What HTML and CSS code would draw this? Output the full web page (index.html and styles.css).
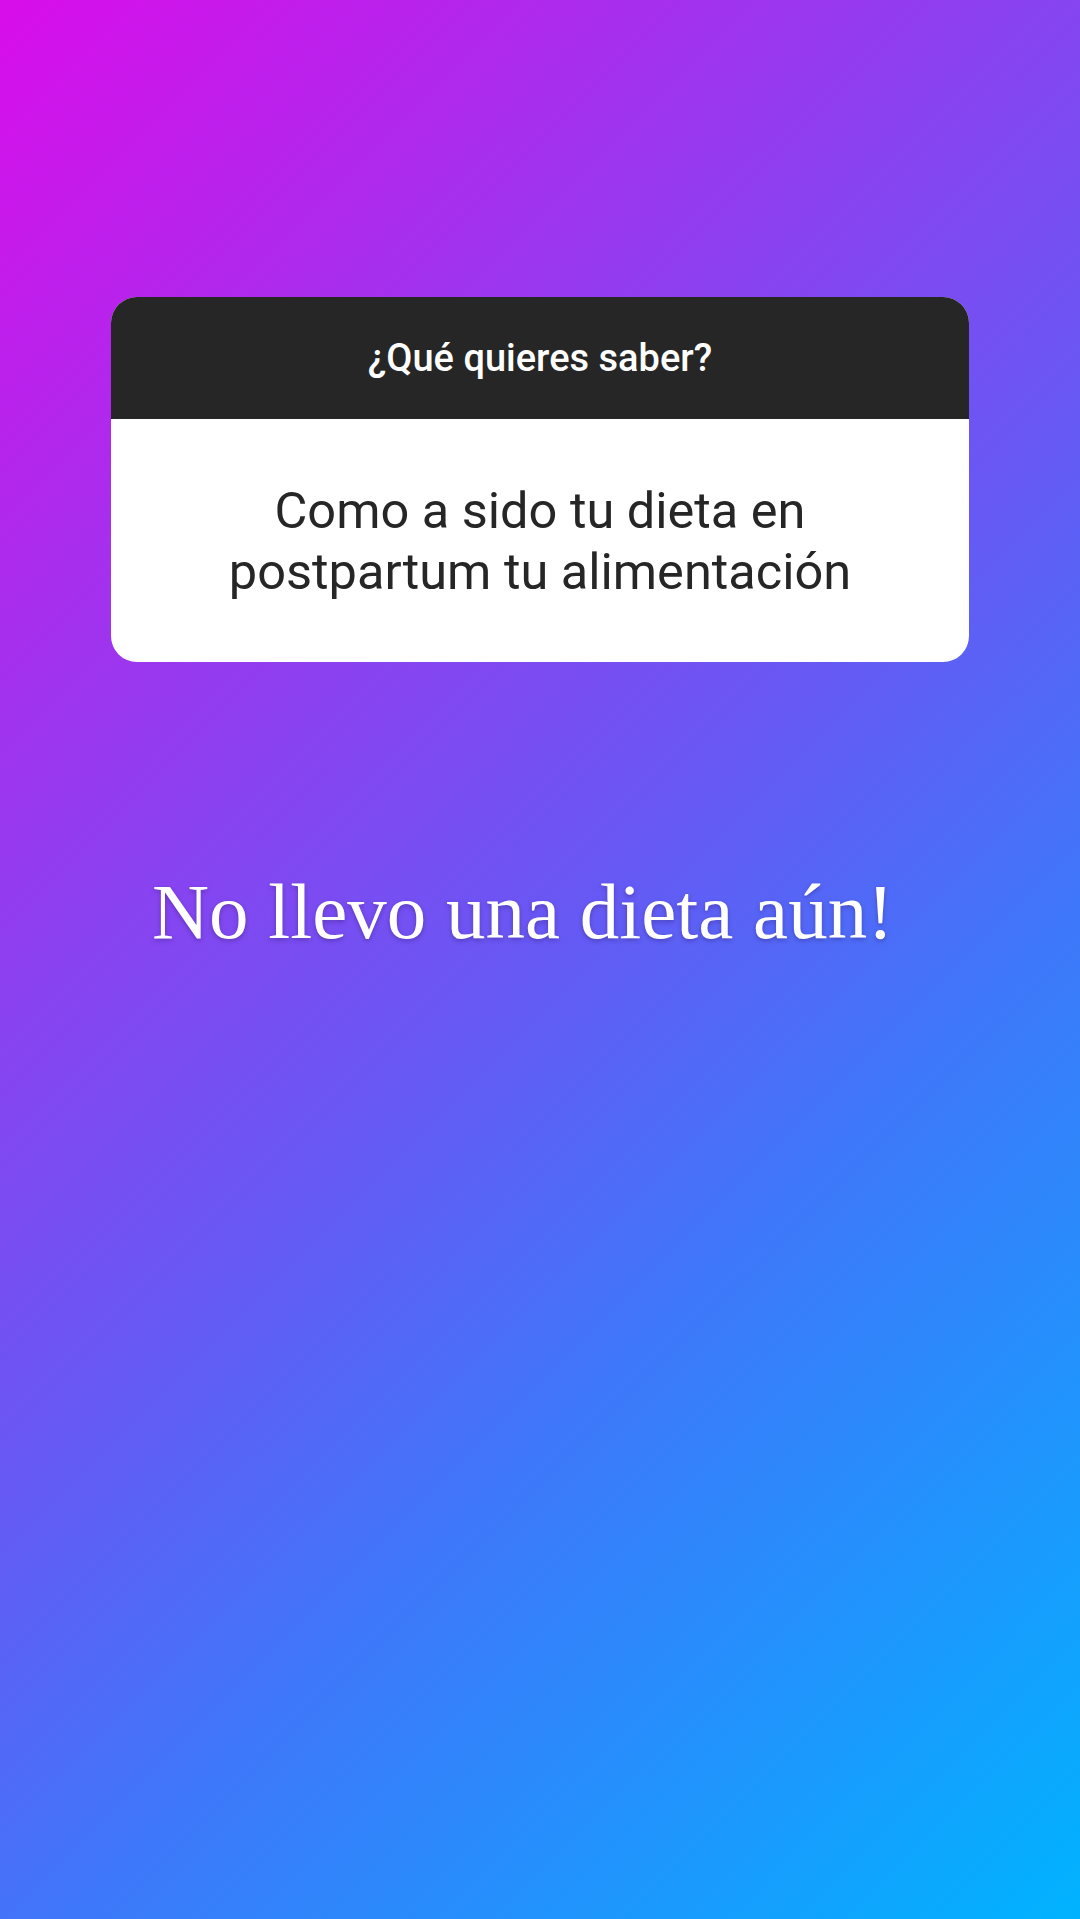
FILE: index.html
```html
<!DOCTYPE html>
<html lang="es">
<head>
<meta charset="utf-8">
<title>Pregunta</title>
<link rel="stylesheet" href="styles.css">
</head>
<body>
<main class="story">
  <section class="qbox">
    <header class="qbox-head">¿Qué quieres saber?</header>
    <div class="qbox-body">
      <p class="qbox-text">Como a sido tu dieta en<br>postpartum tu alimentación</p>
    </div>
  </section>
  <p class="answer">No llevo una dieta aún!</p>
</main>
</body>
</html>
```

FILE: styles.css
```css
html, body {
  margin: 0;
  padding: 0;
}
body {
  width: 1080px;
  height: 1919px;
  overflow: hidden;
}
.story {
  width: 1080px;
  height: 1919px;
  box-sizing: border-box;
  padding-top: 297px;
  background: linear-gradient(135deg, #d90de9 0%, #8a42f0 34%, #6659f4 50%, #3f77fa 66%, #00b3ff 100%);
  display: flex;
  flex-direction: column;
  align-items: flex-start;
}
.qbox {
  margin-left: 111px;
  width: 858px;
  border-radius: 26px;
  overflow: hidden;
  background: #ffffff;
}
.qbox-head {
  height: 122px;
  background: #262626;
  color: #ffffff;
  font-family: Roboto, "Liberation Sans", sans-serif;
  font-weight: 500;
  font-size: 38px;
  display: flex;
  align-items: center;
  justify-content: center;
}
.qbox-body {
  height: 243px;
  display: flex;
  align-items: center;
  justify-content: center;
}
.qbox-text {
  margin: 0;
  text-align: center;
  color: #262626;
  font-family: Roboto, "Liberation Sans", sans-serif;
  font-size: 50.5px;
  line-height: 61px;
}
.answer {
  margin: 0;
  margin-top: 205px;
  margin-left: 152px;
  color: #ffffff;
  font-family: "Liberation Serif", serif;
  font-size: 79px;
  line-height: 90px;
  text-shadow: 0 2px 4px rgba(40, 20, 90, 0.35);
}
```
